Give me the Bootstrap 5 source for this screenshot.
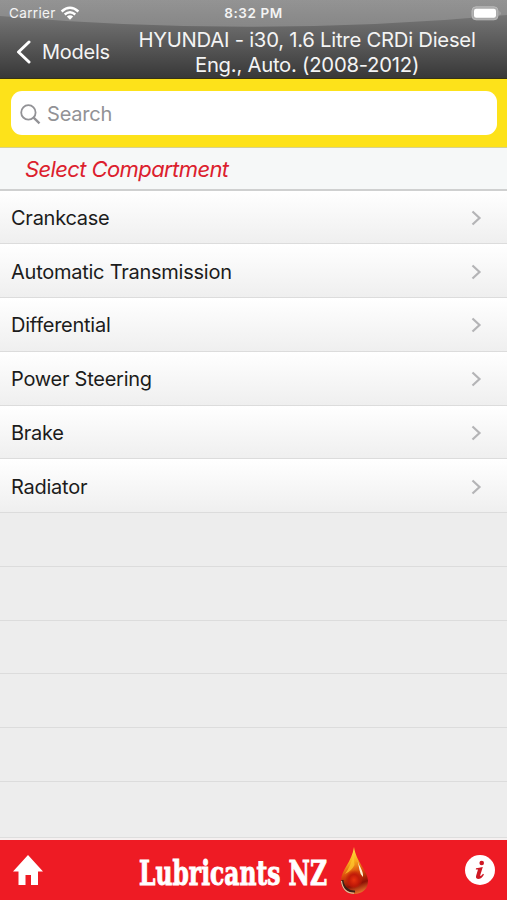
<!DOCTYPE html>
<html lang="en">
<head>
<meta charset="utf-8">
<meta name="viewport" content="width=device-width, initial-scale=1">
<title>Lubricants NZ</title>
<link href="https://cdn.jsdelivr.net/npm/bootstrap@5.3.0/dist/css/bootstrap.min.css" rel="stylesheet">
<style>
body{font-family:Inter,"Liberation Sans",sans-serif;background:#ededed;height:900px;overflow:hidden;color:#1c1c1c}
.top-bar{height:79px;background:linear-gradient(#858585,#686868 36%,#383838);color:#f4f4f4;border-bottom:1px solid #383313}
.gloss{left:0;top:0;width:100%;height:30px}
.status-row{height:27px;font-size:13.5px;line-height:27px}
.carrier{padding-left:9px;width:190px;letter-spacing:.35px}
.clock{font-weight:600;letter-spacing:.55px}
.title-row{height:52px}
.back-link{padding:0 0 2px 16px;width:137px;font-size:20px;letter-spacing:-.25px}
.title-text{font-size:20.3px;line-height:24.5px;width:340px;letter-spacing:-.25px;margin-top:-1px}
.search-zone{height:69px;background:#fde21a;padding:12px 10px 13px 11px;border-bottom:1px solid #d5d193}
.search-box{height:44px;background:#fff;border-radius:11px;color:#929296;font-size:20px;letter-spacing:-.2px;padding:2px 0 0 9px}
.search-label{margin-left:6px}
.heading{height:42.5px;background:#f6f8f8;border-bottom:2px solid #cfd0d0;color:#dc202d;font-size:22px;font-style:italic;padding:1px 0 0 25px;letter-spacing:-.6px}
.line-row{height:53.75px;border:0;border-bottom:1px solid #dcdcdc;border-radius:0;background:transparent}
.item-row{background:linear-gradient(#fff,#efefef);padding:2px 25px 0 11px;font-size:20px;letter-spacing:-.25px;color:#1c1c1c}
.foot{height:60px;background:#ee1b24;padding:0 12px 0 13px;box-shadow:0 -2px 0 #f5f0f0,0 -3px 0 #dedede}
</style>
</head>
<body class="d-flex flex-column">
<header class="top-bar position-relative flex-shrink-0">
  <svg class="gloss position-absolute" viewBox="0 0 507 30" preserveAspectRatio="none"><defs><linearGradient id="gl" x2="0" y2="1"><stop stop-color="#fff" stop-opacity=".12"/><stop offset="1" stop-color="#fff" stop-opacity=".2"/></linearGradient></defs><path d="M0 0H507V15Q254 38 0 16Z" fill="url(#gl)"/></svg>
  <div class="status-row position-relative d-flex justify-content-between">
    <div class="carrier d-flex align-items-center"><span>Carrier</span>
      <svg width="20" height="15" viewBox="0 0 20 15" class="ms-1" fill="none" stroke="#fff" stroke-width="2.4"><path d="M1.600 5.500Q10-2 18.400 5.500M4.700 8.500Q10 4 15.300 8.500"/><path d="M6.800 10.500Q10 7.800 13.200 10.500L10 13.800Z" fill="#fff" stroke="none"/></svg>
    </div>
    <span class="clock">8:32 PM</span>
    <div class="carrier d-flex align-items-center justify-content-end pe-1"><svg width="32" height="15" viewBox="0 0 32 15"><rect x="1" y=".8" width="26" height="13" rx="4" fill="#aaa" stroke="#b9b9b9"/><rect x="3" y="2.800" width="22" height="9" rx="2.200" fill="#fff"/><path d="M28.500 5v4.500Q31 7.300 28.500 5" fill="#aaa"/></svg></div>
  </div>
  <div class="title-row position-relative d-flex align-items-center">
    <div class="back-link d-flex align-items-center"><svg width="16" height="24" viewBox="0 0 16 24" fill="none" stroke="#fff" stroke-width="3" stroke-linecap="round" stroke-linejoin="round"><path d="M13 2 2.500 12 13 22"/></svg><span style="margin-left:10px">Models</span></div>
    <div class="title-text text-center text-nowrap">HYUNDAI - i30, 1.6 Litre CRDi Diesel<br>Eng., Auto. (2008-2012)</div>
  </div>
</header>
<div class="search-zone flex-shrink-0">
  <div class="search-box d-flex align-items-center"><svg width="21" height="21" viewBox="0 0 21 21" fill="none" stroke="#929296" stroke-width="1.8"><circle cx="8.400" cy="8.400" r="7.200"/><path d="M13.600 13.600 19.500 19.300" stroke-width="2.300"/></svg><span class="search-label">Search</span></div>
</div>
<h1 class="heading d-flex align-items-center mb-0 fw-normal flex-shrink-0">Select Compartment</h1>
<main class="list-group list-group-flush flex-fill overflow-hidden rounded-0">
  <a class="list-group-item line-row item-row d-flex align-items-center justify-content-between flex-shrink-0">Crankcase<svg width="11" height="16" viewBox="0 0 11 16" fill="none" stroke="#b4b4b6" stroke-width="2.2"><path d="M1.500 1.500 8.500 8 1.500 14.500"/></svg></a>
  <a class="list-group-item line-row item-row d-flex align-items-center justify-content-between flex-shrink-0">Automatic Transmission<svg width="11" height="16" viewBox="0 0 11 16" fill="none" stroke="#b4b4b6" stroke-width="2.2"><path d="M1.500 1.500 8.500 8 1.500 14.500"/></svg></a>
  <a class="list-group-item line-row item-row d-flex align-items-center justify-content-between flex-shrink-0">Differential<svg width="11" height="16" viewBox="0 0 11 16" fill="none" stroke="#b4b4b6" stroke-width="2.2"><path d="M1.500 1.500 8.500 8 1.500 14.500"/></svg></a>
  <a class="list-group-item line-row item-row d-flex align-items-center justify-content-between flex-shrink-0">Power Steering<svg width="11" height="16" viewBox="0 0 11 16" fill="none" stroke="#b4b4b6" stroke-width="2.2"><path d="M1.500 1.500 8.500 8 1.500 14.500"/></svg></a>
  <a class="list-group-item line-row item-row d-flex align-items-center justify-content-between flex-shrink-0">Brake<svg width="11" height="16" viewBox="0 0 11 16" fill="none" stroke="#b4b4b6" stroke-width="2.2"><path d="M1.500 1.500 8.500 8 1.500 14.500"/></svg></a>
  <a class="list-group-item line-row item-row d-flex align-items-center justify-content-between flex-shrink-0">Radiator<svg width="11" height="16" viewBox="0 0 11 16" fill="none" stroke="#b4b4b6" stroke-width="2.2"><path d="M1.500 1.500 8.500 8 1.500 14.500"/></svg></a>
  <div class="line-row flex-shrink-0"></div><div class="line-row flex-shrink-0"></div><div class="line-row flex-shrink-0"></div><div class="line-row flex-shrink-0"></div><div class="line-row flex-shrink-0"></div>
</main>
<footer class="foot position-relative d-flex align-items-center justify-content-between flex-shrink-0">
  <svg width="30" height="30" viewBox="0 0 30 30" fill="#fff"><path d="M15 0 30 16.500H25V30H18V20H12.500V30H5.500V16.500H0Z"/></svg>
  <svg width="240" height="60" viewBox="0 0 240 60">
    <defs>
      <linearGradient id="oil" x1=".4" x2=".6" y2="1"><stop stop-color="#ffe94a"/><stop offset=".3" stop-color="#f9ad1c"/><stop offset=".55" stop-color="#d9480c"/><stop offset=".8" stop-color="#8d1005"/><stop offset="1" stop-color="#e7762b"/></linearGradient>
      <radialGradient id="core" cy=".6"><stop stop-color="#e8320f"/><stop offset=".55" stop-color="#c21a08"/><stop offset="1" stop-color="#c21a08" stop-opacity="0"/></radialGradient>
    </defs>
    <text transform="translate(5 44.500) scale(.79 1)" font-family="'DejaVu Serif Condensed','DejaVu Serif',serif" font-size="34" font-weight="700" fill="#fff" stroke="#fff" stroke-width=".9" textLength="238" lengthAdjust="spacingAndGlyphs">Lubricants NZ</text>
    <path d="M220 7C218 22 207 30 207 41C207 49 213 54 220.500 54S234 49 234 41C234 31 222 22 220 7Z" fill="url(#oil)"/>
    <ellipse cx="220" cy="38" rx="9" ry="10" fill="url(#core)"/>
    <path d="M208.500 40C209 47 214 52 221 51.500" fill="none" stroke="#3c2016" stroke-width="2"/>
    <path d="M207.500 41C208.500 49 213 53.200 220 53.300" fill="none" stroke="#dfc5a4" stroke-width="1.100"/>
    <path d="M223.500 20C225 27 229.500 30 229 37Q226 34 225.500 30Z" fill="#fff5d5"/>
    <path d="M219.500 14Q217 26 211 34Q217.500 31 220.500 25Z" fill="#ffc72e" opacity=".75"/>
  </svg>
  <svg width="30" height="30" viewBox="0 0 30 30"><circle cx="15" cy="15" r="15" fill="#fff"/><circle cx="16.700" cy="8" r="2.300" fill="#ce1823"/><path d="M11 13.200Q14 12.700 17.800 12L15 21Q16.500 21 18 18.800L19 19.500Q16.500 24 13 24Q10.300 23.500 11.200 20.500L13 14.500H10.800Z" fill="#ce1823"/></svg>
</footer>
<script src="https://cdn.jsdelivr.net/npm/bootstrap@5.3.0/dist/js/bootstrap.bundle.min.js"></script>
</body>
</html>
